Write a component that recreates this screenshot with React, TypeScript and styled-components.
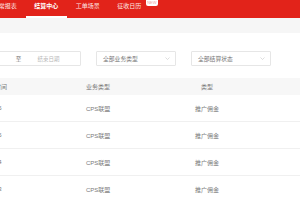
import { createGlobalStyle, styled } from "styled-components";

const GlobalStyle = createGlobalStyle`
  html, body {
    margin: 0;
    padding: 0;
    background: #fff;
    overflow: hidden;
  }
  body {
    font-family: "Liberation Sans", "Noto Sans CJK SC", sans-serif;
  }
`;

const Page = styled.div`
  margin-left: -40px;
  width: 380px;
`;

const NavBar = styled.div`
  display: flex;
  height: 18px;
  padding-left: 24px;
  background: #e2231a;
`;

const Tab = styled.div<{ $active?: boolean }>`
  position: relative;
  width: 41.5px;
  height: 18px;
  box-sizing: border-box;
  line-height: 12px;
  font-size: 6px;
  text-align: center;
  color: ${(p) => (p.$active ? "#fff" : "#fde3e1")};
  font-weight: ${(p) => (p.$active ? 700 : 400)};
  border-bottom: 2px solid ${(p) => (p.$active ? "#fff" : "transparent")};
`;

const Badge = styled.span`
  position: absolute;
  top: 0;
  right: -8px;
  padding: 0 1.5px;
  height: 6px;
  line-height: 6px;
  font-size: 4px;
  font-weight: 400;
  color: #f0a3a0;
  background: #fff;
  border-radius: 0 0 2px 2px;
`;

const Band = styled.div`
  height: 15px;
  background: #f6f6f6;
`;

const FilterRow = styled.div`
  display: flex;
  gap: 15px;
  margin-top: 18px;
  padding-left: 1px;
`;

const RangeBox = styled.div`
  display: flex;
  align-items: center;
  width: 120px;
  height: 15px;
  box-sizing: border-box;
  border: 1px solid #e6e6e6;
  border-radius: 1px;
  font-size: 5.5px;
`;

const RangeInput = styled.span<{ $grow?: boolean }>`
  flex: 1;
  padding-left: ${(p) => (p.$grow ? "13px" : "8px")};
  color: #b8b8b8;
`;

const RangeSep = styled.span`
  width: 12px;
  text-align: center;
  color: #777;
`;

const Select = styled.div`
  display: flex;
  align-items: center;
  justify-content: space-between;
  width: 80px;
  height: 15px;
  box-sizing: border-box;
  padding: 0 5px 0 6px;
  border: 1px solid #e6e6e6;
  border-radius: 1px;
  font-size: 5.8px;
  color: #777;
`;

const Table = styled.div`
  margin-top: 12px;
`;

const Row = styled.div<{ $head?: boolean }>`
  display: grid;
  grid-template-columns: 115px 84px 74px 1fr;
  align-items: center;
  height: ${(p) => (p.$head ? "17px" : "27px")};
  box-sizing: border-box;
  padding-left: 11px;
  background: ${(p) => (p.$head ? "#f7f7f7" : "#fff")};
  border-bottom: ${(p) => (p.$head ? "none" : "1px solid #f0f0f0")};
  font-size: 6px;
  color: #7a7a7a;
`;

const Cell = styled.div<{ $center?: boolean }>`
  text-align: ${(p) => (p.$center ? "center" : "left")};
  white-space: nowrap;
`;

function Chevron() {
  return (
    <svg width="5" height="3" viewBox="0 0 10 6">
      <path d="M1 1l4 4 4-4" fill="none" stroke="#c8c8c8" strokeWidth="1.2" />
    </svg>
  );
}

const tabs = ["异常报表", "结算中心", "工单场景", "征收日历"];
const rows = ["2023-06-05", "2023-06-05", "2023-06-04", "2023-06-03"];

export default function App() {
  return (
    <Page>
      <GlobalStyle />
      <NavBar>
        {tabs.map((t, i) => (
          <Tab key={t} $active={i === 1}>
            {t}
            {i === 3 && <Badge>NEW</Badge>}
          </Tab>
        ))}
      </NavBar>
      <Band />
      <FilterRow>
        <RangeBox>
          <RangeInput>开始日期</RangeInput>
          <RangeSep>至</RangeSep>
          <RangeInput $grow>结束日期</RangeInput>
        </RangeBox>
        <Select>
          全部业务类型
          <Chevron />
        </Select>
        <Select>
          全部结算状态
          <Chevron />
        </Select>
      </FilterRow>
      <Table>
        <Row $head>
          <Cell>账单结算时间</Cell>
          <Cell>业务类型</Cell>
          <Cell $center>类型</Cell>
          <Cell />
        </Row>
        {rows.map((d, i) => (
          <Row key={i}>
            <Cell>{d}</Cell>
            <Cell>CPS联盟</Cell>
            <Cell $center>推广佣金</Cell>
            <Cell />
          </Row>
        ))}
      </Table>
    </Page>
  );
}
